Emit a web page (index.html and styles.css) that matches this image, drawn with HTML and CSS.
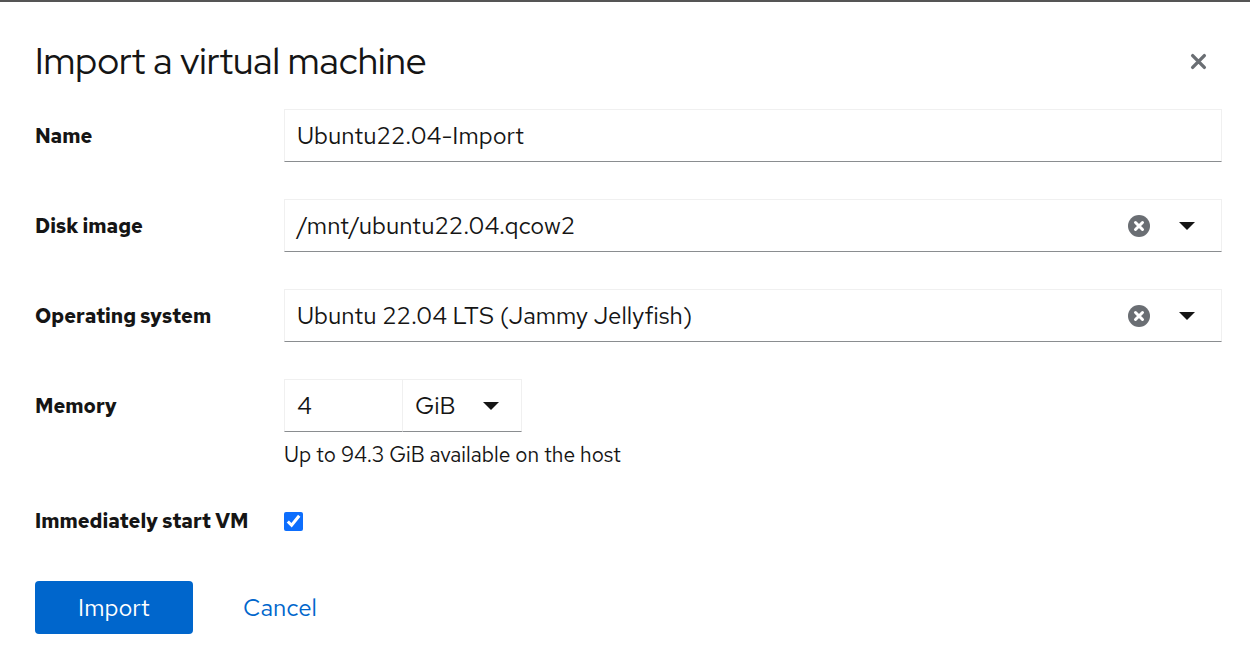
FILE: index.html
```html
<!DOCTYPE html>
<html lang="en">
<head>
<meta charset="utf-8">
<title>Import a virtual machine</title>
<link rel="stylesheet" href="styles.css">
</head>
<body>
<div class="topbar"></div>
<div class="modal">
  <header class="modal-header">
    <h1 class="modal-title">Import a virtual machine</h1>
    <button class="close-btn" aria-label="Close">
      <svg viewBox="0 0 16 16" width="17" height="17"><path d="M2.5 2.5 L13.5 13.5 M13.5 2.5 L2.5 13.5" stroke="#6a6e73" stroke-width="3.2" stroke-linecap="round"/></svg>
    </button>
  </header>
  <form class="form">
    <div class="label">Name</div>
    <div class="control"><div class="input">Ubuntu22.04-Import</div></div>

    <div class="label">Disk image</div>
    <div class="control">
      <div class="input select">
        <span class="value">/mnt/ubuntu22.04.qcow2</span>
        <span class="clear"><svg viewBox="0 0 22 22" width="22" height="22"><circle cx="11" cy="11" r="11" fill="#6a6e73"/><path d="M7.5 7.5 L14.5 14.5 M14.5 7.5 L7.5 14.5" stroke="#fff" stroke-width="3" stroke-linecap="round"/></svg></span>
        <span class="caret"></span>
      </div>
    </div>

    <div class="label">Operating system</div>
    <div class="control">
      <div class="input select">
        <span class="value">Ubuntu 22.04 LTS (Jammy Jellyfish)</span>
        <span class="clear"><svg viewBox="0 0 22 22" width="22" height="22"><circle cx="11" cy="11" r="11" fill="#6a6e73"/><path d="M7.5 7.5 L14.5 14.5 M14.5 7.5 L7.5 14.5" stroke="#fff" stroke-width="3" stroke-linecap="round"/></svg></span>
        <span class="caret"></span>
      </div>
    </div>

    <div class="label">Memory</div>
    <div class="control">
      <div class="memory">
        <div class="input mem-num">4</div>
        <div class="input mem-unit"><span class="value">GiB</span><span class="caret"></span></div>
      </div>
      <div class="helper">Up to 94.3 GiB available on the host</div>
    </div>

    <div class="label check-label">Immediately start VM</div>
    <div class="control check-control">
      <input type="checkbox" class="checkbox" checked>
    </div>
  </form>
  <footer class="footer">
    <button class="btn-primary" type="button">Import</button>
    <button class="btn-link" type="button">Cancel</button>
  </footer>
</div>
</body>
</html>
```
FILE: styles.css
```css
html, body {
  margin: 0;
  padding: 0;
  background: #fff;
}
body {
  font-family: "Red Hat Text", Lato, "Noto Sans", sans-serif;
  color: #151515;
}
.topbar {
  height: 2px;
  background: #555555;
}
.modal {
  padding: 0 28px 0 35px;
}
.modal-header {
  box-sizing: border-box;
  display: flex;
  align-items: center;
  justify-content: space-between;
  height: 107px;
  padding-top: 12px;
}
.modal-title {
  margin: 0;
  font-family: "Red Hat Display", Lato, "Noto Sans", sans-serif;
  font-weight: 400;
  font-size: 37px;
  line-height: 1.3;
  color: #151515;
}
.close-btn {
  border: 0;
  background: none;
  padding: 0;
  margin-right: 15px;
  width: 17px;
  height: 17px;
  display: flex;
  cursor: pointer;
}
.form {
  display: grid;
  grid-template-columns: 249px 1fr;
  row-gap: 37px;
  margin: 0;
}
.label {
  height: 53px;
  display: flex;
  align-items: center;
  font-size: 20px;
  font-weight: 700;
}
.input {
  box-sizing: border-box;
  height: 53px;
  border: 1px solid #f0f0f0;
  border-bottom-color: #8a8d90;
  padding: 0 12px;
  display: flex;
  align-items: center;
  font-size: 24px;
  color: #151515;
}
.select .value {
  flex: 1;
}
.clear {
  display: flex;
  margin-right: 29px;
}
.caret {
  width: 0;
  height: 0;
  border-left: 8px solid transparent;
  border-right: 8px solid transparent;
  border-top: 8px solid #151515;
  margin-right: 14px;
}
.memory {
  display: flex;
}
.mem-num {
  width: 119px;
}
.mem-unit {
  width: 119px;
  border-left: 0;
}
.mem-unit .value {
  flex: 1;
}
.mem-unit .caret {
  margin-right: 10px;
}
.helper {
  margin-top: 8px;
  font-size: 21px;
  line-height: 30px;
}
.check-label {
  height: 28px;
}
.check-control {
  display: flex;
  align-items: center;
  height: 28px;
}
.checkbox {
  margin: 0;
  width: 19px;
  height: 19px;
  accent-color: #0d6efd;
}
.footer {
  display: flex;
  align-items: center;
  margin-top: 46px;
  gap: 24px;
}
.btn-primary {
  height: 53px;
  width: 158px;
  border: 0;
  border-radius: 4px;
  background: #0066cc;
  color: #fff;
  font-family: inherit;
  font-size: 24px;
}
.btn-link {
  border: 0;
  background: none;
  color: #0066cc;
  font-family: inherit;
  font-size: 24px;
  padding: 0 26px;
}
```
